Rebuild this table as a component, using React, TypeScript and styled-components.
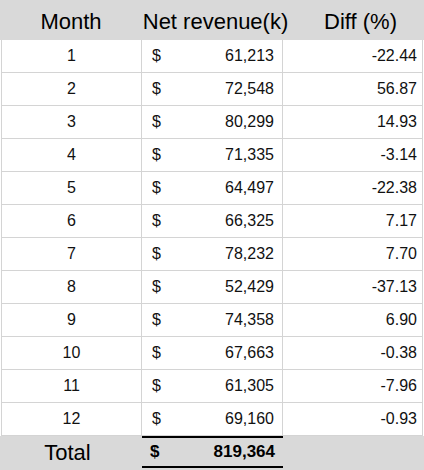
import React from 'react';
import styled, { createGlobalStyle } from 'styled-components';

const GlobalStyle = createGlobalStyle`
  html, body {
    margin: 0;
    padding: 0;
    background: #ffffff;
  }
  body {
    font-family: 'Liberation Sans', Arial, sans-serif;
    color: #111111;
  }
`;

const rows = [
  { month: 1, revenue: '61,213', diff: '-22.44' },
  { month: 2, revenue: '72,548', diff: '56.87' },
  { month: 3, revenue: '80,299', diff: '14.93' },
  { month: 4, revenue: '71,335', diff: '-3.14' },
  { month: 5, revenue: '64,497', diff: '-22.38' },
  { month: 6, revenue: '66,325', diff: '7.17' },
  { month: 7, revenue: '78,232', diff: '7.70' },
  { month: 8, revenue: '52,429', diff: '-37.13' },
  { month: 9, revenue: '74,358', diff: '6.90' },
  { month: 10, revenue: '67,663', diff: '-0.38' },
  { month: 11, revenue: '61,305', diff: '-7.96' },
  { month: 12, revenue: '69,160', diff: '-0.93' },
];

export default function App() {
  return (
    <>
      <GlobalStyle />
      <Sheet>
        <HeaderRow>
          <HeaderCell>Month</HeaderCell>
          <HeaderCell $shift={6}>Net revenue(k)</HeaderCell>
          <HeaderCell $shift={14}>Diff (%)</HeaderCell>
        </HeaderRow>

        {rows.map((row) => (
          <BodyRow key={row.month}>
            <MonthCell>{row.month}</MonthCell>
            <MoneyCell>
              <span>$</span>
              <span>{row.revenue}</span>
            </MoneyCell>
            <DiffCell>{row.diff}</DiffCell>
          </BodyRow>
        ))}

        <TotalRow>
          <TotalLabel>Total</TotalLabel>
          <TotalMoney>
            <span>$</span>
            <span>819,364</span>
          </TotalMoney>
          <div />
        </TotalRow>
      </Sheet>
    </>
  );
}

const Sheet = styled.div`
  width: 424px;
  height: 470px;
  overflow: hidden;
  display: flex;
  flex-direction: column;
`;

const HeaderRow = styled.div`
  display: grid;
  grid-template-columns: 142px 141px 141px;
  height: 40px;
  background-color: #d9d9d9;
`;

const HeaderCell = styled.div<{ $shift?: number }>`
  display: flex;
  align-items: center;
  justify-content: center;
  padding-top: 3px;
  padding-left: ${(p) => p.$shift ?? 0}px;
  font-size: 22px;
  white-space: nowrap;
  color: #000000;
`;

const BodyRow = styled.div`
  display: grid;
  grid-template-columns: 141px 141px 140px;
  height: 33px;
  padding-left: 1px;
  box-sizing: border-box;
  font-size: 16px;
`;

const Cell = styled.div`
  display: flex;
  align-items: center;
  box-sizing: border-box;
  border-right: 1px solid #d4d4d4;
  border-bottom: 1px solid #d4d4d4;
`;

const MonthCell = styled(Cell)`
  justify-content: center;
  border-left: 1px solid #d4d4d4;
`;

const MoneyCell = styled(Cell)`
  justify-content: space-between;
  padding: 0 8px 0 10px;
`;

const DiffCell = styled(Cell)`
  justify-content: flex-end;
  padding-right: 5px;
`;

const TotalRow = styled.div`
  display: grid;
  grid-template-columns: 142px 141px 141px;
  height: 34px;
  background-color: #d9d9d9;
`;

const TotalLabel = styled.div`
  display: flex;
  align-items: center;
  justify-content: center;
  padding-right: 7px;
  font-size: 22px;
  color: #000000;
`;

const TotalMoney = styled.div`
  display: flex;
  align-items: center;
  justify-content: space-between;
  box-sizing: border-box;
  padding: 0 8px 0 8px;
  margin-bottom: 2px;
  border-top: 2px solid #000000;
  border-bottom: 2px solid #000000;
  font-size: 17px;
  font-weight: 700;
  color: #000000;
`;
